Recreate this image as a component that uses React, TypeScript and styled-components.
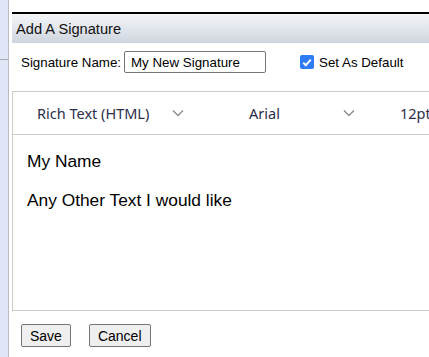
import React from "react";
import styled, { createGlobalStyle } from "styled-components";

const Global = createGlobalStyle`
  html, body { margin: 0; padding: 0; background: #fff; }
  body { font-family: "Liberation Sans", Arial, sans-serif; overflow: hidden; }
`;

const Page = styled.div`
  display: flex;
  width: 429px;
  height: 357px;
  overflow: hidden;
`;

const SideStrip = styled.div`
  flex: 0 0 8px;
  display: flex;
  flex-direction: column;
  background: #e1e6f6;
  border-right: 1px solid #b9bcc4;
`;

const StripTop = styled.div`
  height: 59px;
  border-bottom: 1px solid #a9abb2;
`;

const Main = styled.div`
  flex: 1;
  min-width: 0;
  padding: 12px 0 0 3px;
  display: flex;
  flex-direction: column;
`;

const Dialog = styled.div`
  border-top: 2px solid #000;
  display: flex;
  flex-direction: column;
  width: 480px;
`;

const Header = styled.div`
  height: 29px;
  display: flex;
  align-items: center;
  padding-left: 4px;
  font-size: 14.67px;
  color: #111;
  background: linear-gradient(to bottom, #f3f5f8 0%, #e2e6ec 50%, #cfd5de 100%);
`;

const NameRow = styled.div`
  display: flex;
  align-items: center;
  height: 38px;
  padding-left: 9px;
  font-size: 13.33px;
  color: #000;
`;

const Label = styled.label`
  margin-right: 3px;
`;

const NameInput = styled.input`
  box-sizing: border-box;
  width: 142px;
  height: 22px;
  border: 1px solid #767676;
  border-radius: 2px;
  padding: 0 6px;
  font-family: "Liberation Sans", Arial, sans-serif;
  font-size: 13.33px;
  color: #000;
  outline: none;
`;

const CheckWrap = styled.label`
  display: flex;
  align-items: center;
  margin-left: 34px;
  gap: 5px;
`;

const CheckBox = styled.span`
  width: 14px;
  height: 14px;
  border-radius: 2px;
  background: #2e7bf6;
  display: flex;
  align-items: center;
  justify-content: center;
`;

const Editor = styled.div`
  margin-top: 10px;
  height: 218px;
  border: 1px solid #cbcbcb;
  border-right: none;
  display: flex;
  flex-direction: column;
`;

const Toolbar = styled.div`
  height: 42px;
  border-bottom: 1px solid #cbcbcb;
  display: flex;
  align-items: center;
  font-family: "Noto Sans", "Open Sans", sans-serif;
  font-size: 14.5px;
  color: #2b2e4a;
`;

const Select = styled.div<{ $w: number; $pl: number }>`
  display: flex;
  align-items: center;
  justify-content: space-between;
  flex: 0 0 ${(p) => p.$w}px;
  padding-left: ${(p) => p.$pl}px;
  box-sizing: border-box;
  white-space: nowrap;
`;

const Chevron = styled.svg`
  width: 12px;
  height: 8px;
  margin-right: 14px;
`;

const Content = styled.div`
  flex: 1;
  padding: 16px 0 0 14px;
  font-size: 17.33px;
  color: #000;
  display: flex;
  flex-direction: column;
  gap: 18px;
`;

const Buttons = styled.div`
  display: flex;
  gap: 18px;
  padding: 13px 0 0 9px;
`;

const Button = styled.button`
  box-sizing: border-box;
  height: 23px;
  padding: 0 8px;
  font-family: "Liberation Sans", Arial, sans-serif;
  font-size: 14px;
  color: #000;
  background: #efefef;
  border: 1px solid #767676;
  border-radius: 2px;
`;

const Down = () => (
  <Chevron viewBox="0 0 12 8">
    <path d="M1 1.5 L6 6.5 L11 1.5" fill="none" stroke="#8a8d93" strokeWidth="1.4" />
  </Chevron>
);

export default function App() {
  return (
    <>
      <Global />
      <Page>
        <SideStrip>
          <StripTop />
        </SideStrip>
        <Main>
          <Dialog>
            <Header>Add A Signature</Header>
            <NameRow>
              <Label>Signature Name:</Label>
              <NameInput defaultValue="My New Signature" />
              <CheckWrap>
                <CheckBox>
                  <svg width="10" height="9" viewBox="0 0 10 9">
                    <path d="M1.2 4.6 L3.8 7.2 L8.8 1.6" fill="none" stroke="#fff" strokeWidth="2" />
                  </svg>
                </CheckBox>
                Set As Default
              </CheckWrap>
            </NameRow>
            <Editor>
              <Toolbar>
                <Select $w={185} $pl={24}>
                  Rich Text (HTML)
                  <Down />
                </Select>
                <Select $w={171} $pl={51}>
                  Arial
                  <Down />
                </Select>
                <Select $w={100} $pl={31}>
                  12pt
                </Select>
              </Toolbar>
              <Content>
                <div>My Name</div>
                <div>Any Other Text I would like</div>
              </Content>
            </Editor>
            <Buttons>
              <Button>Save</Button>
              <Button>Cancel</Button>
            </Buttons>
          </Dialog>
        </Main>
      </Page>
    </>
  );
}
